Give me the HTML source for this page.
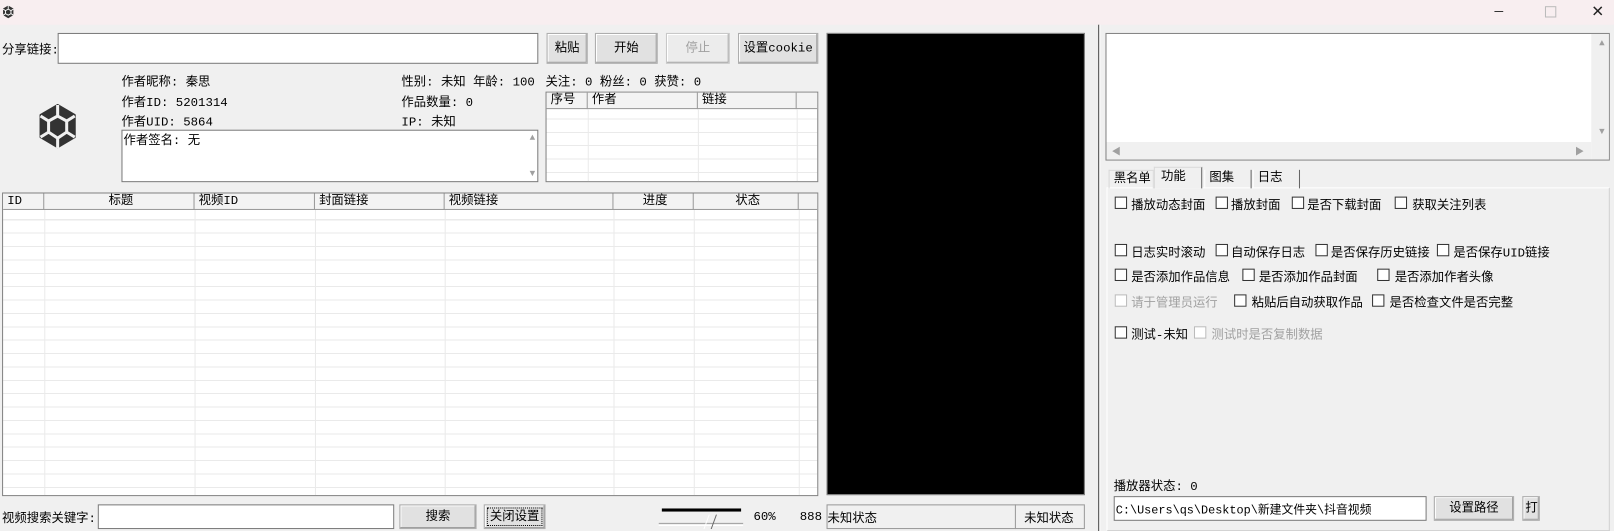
<!DOCTYPE html>
<html><head><meta charset="utf-8"><style>
*{box-sizing:border-box;margin:0;padding:0}
html,body{width:1614px;height:531px;overflow:hidden}
body{background:#f0f0f0;font-family:"Liberation Mono","Noto Sans CJK SC",monospace;font-size:12px;color:#000;position:relative}
#w{position:absolute;left:0;top:0;width:1568px;height:516px;transform:scale(1.0293);transform-origin:0 0}
.a{position:absolute;white-space:nowrap}
.inp{position:absolute;background:#fff;border:1px solid #7a7a7a}
.btn{position:absolute;background:#e1e1e1;border:1px solid #adadad;box-shadow:inset -1px -1px 0 #a0a0a0,1px 1px 0 #fff inset;text-align:center}
.tbl{position:absolute;background:#fff;border:1px solid #828282;overflow:hidden;
 background-image:repeating-linear-gradient(to bottom,transparent 0 12px,#eaeaea 12px 13px)}
.hd{position:absolute;left:0;top:0;right:0;height:16px;background:#f3f3f3;border-bottom:1px solid #999}
.hd span{position:absolute;top:0;height:16px;line-height:15px;border-right:1px solid #999;padding-left:4px}
.vl{position:absolute;top:16px;bottom:0;width:1px;background:#eaeaea}
.cb{position:absolute;width:12px;height:12px;border:1px solid #333;background:#fff}
.cb.d{border-color:#bbb}
.g{color:#a0a0a0}
</style></head><body><div id="w">
<div class="a" style="left:0;top:0;width:1568px;height:24px;background:#f8eef0"></div>
<svg class="a" style="left:2px;top:5px" width="12" height="13" viewBox="0 0 38 44"><path d="M19 1 36 11 36 33 19 43 2 33 2 11Z" fill="#333"/><path d="M19 13 28 18 28 28 19 33 10 28 10 18Z M19 1V13 M2 33 10 28 M36 33 28 28 M10 18 2 13 M28 18 36 13" stroke="#fff" stroke-width="3" fill="none"/></svg>
<div class="a" style="left:1452px;top:4px;font-size:14px;color:#333">—</div>
<div class="a" style="left:1501px;top:6px;width:11px;height:11px;border:1px solid #bbb"></div>
<div class="a" style="left:1546px;top:2px;font-size:15px;color:#222;font-family:'Liberation Sans'">✕</div>

<div class="a" style="left:2px;top:39px">分享链接:</div>
<div class="inp" style="left:56px;top:32px;width:467px;height:30px"></div>
<div class="btn" style="left:531px;top:32px;width:40px;height:30px;line-height:28px">粘贴</div>
<div class="btn" style="left:578px;top:32px;width:61px;height:30px;line-height:28px">开始</div>
<div class="btn g" style="left:647px;top:32px;width:62px;height:30px;line-height:28px;background:#ececec;border-color:#c8c8c8">停止</div>
<div class="btn" style="left:717px;top:32px;width:78px;height:30px;line-height:28px">设置cookie</div>

<svg class="a" style="left:37px;top:101px" width="38" height="43" viewBox="0 0 38 44"><path d="M19 1 36 11 36 33 19 43 2 33 2 11Z" fill="#333" stroke="#333" stroke-linejoin="round" stroke-width="2"/><path d="M19 12 28 17 28 28 19 34 10 28 10 17Z M19 1V12 M2 33 10 28 M36 33 28 28 M10 17 2 12 M28 17 36 12 M19 34V44" stroke="#f0f0f0" stroke-width="3" fill="none"/></svg>
<div class="a" style="left:118px;top:70px">作者昵称: 秦思</div>
<div class="a" style="left:118px;top:90px">作者ID: 5201314</div>
<div class="a" style="left:118px;top:109px">作者UID: 5864</div>
<div class="a" style="left:390px;top:70px">性别: 未知 年龄: 100</div>
<div class="a" style="left:390px;top:90px">作品数量: 0</div>
<div class="a" style="left:390px;top:109px">IP: 未知</div>
<div class="a" style="left:530px;top:70px">关注: 0  粉丝: 0  获赞: 0</div>
<div class="inp" style="left:118px;top:126px;width:405px;height:51px;padding-left:1px">作者签名: 无
<div class="a g" style="right:2px;top:2px;font-size:9px;color:#a0a0a0">▲</div><div class="a g" style="right:2px;bottom:2px;font-size:9px">▼</div></div>

<div class="tbl" style="left:530px;top:89px;width:265px;height:88px">
<div class="hd"><span style="left:0;width:40px">序号</span><span style="left:40px;width:107px">作者</span><span style="left:147px;width:96px">链接</span></div>
<div class="vl" style="left:40px"></div><div class="vl" style="left:147px"></div><div class="vl" style="left:243px"></div></div>

<div class="tbl" style="left:2px;top:187px;width:793px;height:295px">
<div class="hd"><span style="left:0;width:40px">ID</span><span style="left:40px;width:146px;text-align:center">标题</span><span style="left:186px;width:117px">视频ID</span><span style="left:303px;width:126px">封面链接</span><span style="left:429px;width:164px">视频链接</span><span style="left:593px;width:78px;text-align:center">进度</span><span style="left:671px;width:102px;text-align:center">状态</span></div>
<div class="vl" style="left:40px"></div><div class="vl" style="left:186px"></div><div class="vl" style="left:303px"></div><div class="vl" style="left:429px"></div><div class="vl" style="left:593px"></div><div class="vl" style="left:671px"></div><div class="vl" style="left:773px"></div></div>

<div class="a" style="left:2px;top:494px">视频搜索关键字:</div>
<div class="inp" style="left:95px;top:490px;width:288px;height:24px"></div>
<div class="btn" style="left:388px;top:490px;width:75px;height:24px;line-height:22px">搜索</div>
<div class="btn" style="left:470px;top:490px;width:60px;height:24px;line-height:22px;outline:1px dotted #000;outline-offset:-4px">关闭设置</div>
<div class="a" style="left:643px;top:494px;width:77px;height:3px;background:#000"></div>
<div class="a" style="left:640px;top:508px;width:82px;height:3px;border-top:1px solid #a0a0a0;border-bottom:1px solid #fff"></div>
<div class="a" style="left:686px;top:500px;width:8px;height:14px;border-left:1px solid #fff;border-right:1px solid #666;transform:skewX(-20deg)"></div>
<div class="a" style="left:732px;top:495px">60%</div>
<div class="a" style="left:777px;top:495px">888</div>

<div class="a" style="left:803px;top:32px;width:251px;height:449px;background:#000;border:1px solid #888"></div>
<div class="a" style="left:803px;top:490px;width:251px;height:24px;border:1px solid #999"></div>
<div class="a" style="left:986px;top:490px;width:1px;height:24px;background:#999"></div>
<div class="a" style="left:804px;top:494px">未知状态</div>
<div class="a" style="left:995px;top:494px">未知状态</div>

<div class="a" style="left:1067px;top:24px;width:1px;height:507px;background:#333"></div>
<div class="a" style="left:1068px;top:24px;width:1px;height:507px;background:#fff"></div>

<div class="inp" style="left:1074px;top:32px;width:490px;height:124px;border-color:#828282">
<div class="a" style="right:0;top:0;width:17px;height:122px;background:#f0f0f0"></div>
<div class="a" style="left:0;bottom:0;right:17px;height:17px;background:#f0f0f0"></div>
<div class="a" style="right:4px;top:4px;font-size:9px;color:#a0a0a0">▲</div>
<div class="a" style="right:4px;top:90px;font-size:9px;color:#a0a0a0">▼</div>
<div class="a" style="left:5px;bottom:2px;font-size:9px;color:#a0a0a0">◀</div>
<div class="a" style="right:24px;bottom:2px;font-size:9px;color:#a0a0a0">▶</div></div>

<div class="a" style="left:1075px;top:182px;width:489px;height:334px;border:1px solid #d0d0d0;border-left-color:#fff;border-top-color:#fff;background:#f0f0f0"></div>
<div class="a" style="left:1077px;top:165px;width:44px;height:18px;border:1px solid #d9d9d9;border-bottom:none;padding:0 4px;line-height:17px">黑名单</div>
<div class="a" style="left:1121px;top:162px;width:47px;height:21px;border:1px solid #d9d9d9;border-right-color:#666;border-bottom:none;background:#f0f0f0;padding:0 6px;line-height:18px">功能</div>
<div class="a" style="left:1170px;top:165px;width:46px;height:18px;border-left:1px solid #fff;border-right:1px solid #666;padding:0 4px;line-height:17px">图集</div>
<div class="a" style="left:1217px;top:165px;width:46px;height:18px;border-left:1px solid #fff;border-right:1px solid #666;padding:0 4px;line-height:17px">日志</div>

<div class="cb" style="left:1083px;top:191px"></div><div class="a" style="left:1099px;top:190px">播放动态封面</div>
<div class="cb" style="left:1181px;top:191px"></div><div class="a" style="left:1196px;top:190px">播放封面</div>
<div class="cb" style="left:1255px;top:191px"></div><div class="a" style="left:1270px;top:190px">是否下载封面</div>
<div class="cb" style="left:1355px;top:191px"></div><div class="a" style="left:1372px;top:190px">获取关注列表</div>

<div class="cb" style="left:1083px;top:237px"></div><div class="a" style="left:1099px;top:236px">日志实时滚动</div>
<div class="cb" style="left:1181px;top:237px"></div><div class="a" style="left:1196px;top:236px">自动保存日志</div>
<div class="cb" style="left:1278px;top:237px"></div><div class="a" style="left:1293px;top:236px">是否保存历史链接</div>
<div class="cb" style="left:1396px;top:237px"></div><div class="a" style="left:1412px;top:236px">是否保存UID链接</div>

<div class="cb" style="left:1083px;top:261px"></div><div class="a" style="left:1099px;top:260px">是否添加作品信息</div>
<div class="cb" style="left:1207px;top:261px"></div><div class="a" style="left:1223px;top:260px">是否添加作品封面</div>
<div class="cb" style="left:1338px;top:261px"></div><div class="a" style="left:1355px;top:260px">是否添加作者头像</div>

<div class="cb d" style="left:1083px;top:286px"></div><div class="a g" style="left:1099px;top:285px">请于管理员运行</div>
<div class="cb" style="left:1199px;top:286px"></div><div class="a" style="left:1216px;top:285px">粘贴后自动获取作品</div>
<div class="cb" style="left:1333px;top:286px"></div><div class="a" style="left:1350px;top:285px">是否检查文件是否完整</div>

<div class="cb" style="left:1083px;top:317px"></div><div class="a" style="left:1099px;top:316px">测试-未知</div>
<div class="cb d" style="left:1160px;top:317px"></div><div class="a g" style="left:1177px;top:316px">测试时是否复制数据</div>

<div class="a" style="left:1082px;top:463px">播放器状态: 0</div>
<div class="inp" style="left:1082px;top:482px;width:304px;height:24px;padding:4px 0 0 1px;font-size:11.5px">C:\Users\qs\Desktop\新建文件夹\抖音视频</div>
<div class="btn" style="left:1393px;top:482px;width:78px;height:24px;line-height:22px">设置路径</div>
<div class="btn" style="left:1479px;top:482px;width:17px;height:24px;line-height:22px;overflow:hidden;text-align:left;padding-left:2px">打</div>
</div></body></html>
